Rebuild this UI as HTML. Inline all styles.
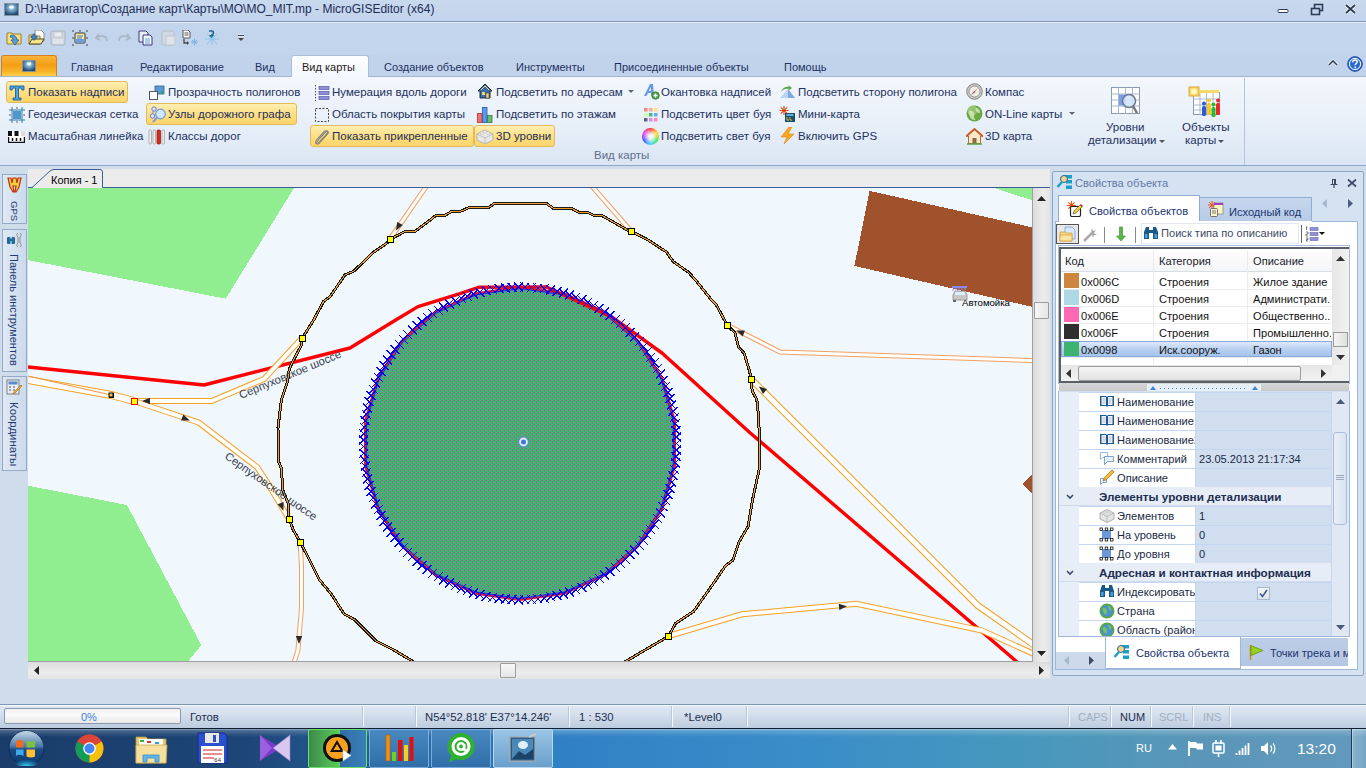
<!DOCTYPE html>
<html><head><meta charset="utf-8">
<style>
*{box-sizing:border-box;margin:0;padding:0}
html,body{width:1366px;height:768px;overflow:hidden}
body{position:relative;background:#cfdcec;font-family:"Liberation Sans",sans-serif;font-size:11.5px;color:#22305e}
.a{position:absolute}
.t{position:absolute;white-space:nowrap;line-height:14px}
#title{left:0;top:0;width:1366px;height:21px;background:linear-gradient(#c9d9ee,#c2d4ec)}
#qat{left:0;top:21px;width:1366px;height:34px;background:#c3d5ec;border-top:1px solid #7f98b8}
#tabs{left:0;top:55px;width:1366px;height:22px;background:#c0d3eb}
#ribbon{left:0;top:76px;width:1366px;height:90px;background:linear-gradient(#f3f7fc,#e7eff8 55%,#dbe6f4);border-top:1px solid #9fb6d3;border-bottom:1px solid #91a9c8}
.hl{position:absolute;height:22px;border:1px solid #e3b95c;border-radius:3px;background:linear-gradient(#fdeeb3,#fddf85 50%,#fbd46a)}
#doc{left:0;top:166px;width:1366px;height:538px;background:#cfdcec}
#status{left:0;top:704px;width:1366px;height:24px;background:linear-gradient(#dfe8f4,#d3deec 45%,#bccbdf);border-top:1px solid #7d94b4;box-shadow:inset 0 1px 0 #f6f9fd}
#taskbar{left:0;top:728px;width:1366px;height:40px;background:linear-gradient(rgba(255,255,255,.32),rgba(255,255,255,.12) 5px,rgba(255,255,255,0) 9px),linear-gradient(90deg,#1a3c6a 0%,#1d4677 18%,#2f80c4 40%,#3a8ec8 60%,#4898bc 76%,#5a96b8 88%,#6299bc 100%)}
</style></head><body>
<!-- TITLE -->
<div id="title" class="a">
  <svg class="a" style="left:4px;top:3px" width="15" height="13" viewBox="0 0 15 13"><defs><radialGradient id="spot" cx="50%" cy="35%" r="60%"><stop offset="0" stop-color="#e8f4fc"/><stop offset=".3" stop-color="#8ab8d8"/><stop offset="1" stop-color="#1e4a70"/></radialGradient></defs><rect x="0.5" y="0.5" width="14" height="12" fill="url(#spot)" stroke="#8a939c"/><ellipse cx="7.5" cy="4" rx="2.5" ry="1.6" fill="#f4fbff"/></svg>
  <div class="t" style="left:25px;top:2px;font-size:12px;color:#1e2c56">D:\Навигатор\Создание карт\Карты\MO\MO_MIT.mp - MicroGISEditor (x64)</div>
  <svg class="a" style="left:1277px;top:6px" width="12" height="10"><rect x="1" y="3.5" width="10" height="3" rx="1" fill="#fff" stroke="#2d3d57"/></svg>
  <svg class="a" style="left:1310px;top:3px" width="14" height="13"><rect x="4.5" y="1.5" width="8" height="6" fill="none" stroke="#2d3d57" stroke-width="1.6"/><rect x="1.5" y="5.5" width="8" height="6" fill="#c5d6ec" stroke="#2d3d57" stroke-width="1.6"/></svg>
  <svg class="a" style="left:1344px;top:3px" width="13" height="12"><path d="M2 2 L11 10 M11 2 L2 10" stroke="#fff" stroke-width="3.4"/><path d="M2 2 L11 10 M11 2 L2 10" stroke="#2d3d57" stroke-width="2"/></svg>
</div>
<!-- QAT -->
<div id="qat" class="a"><div class="a" style="left:0;top:0;width:1366px;height:1px;background:#e4ecf7"></div>
  <svg class="a" style="left:6px;top:8px" width="17" height="16" viewBox="0 0 17 16"><path d="M1 3h5l1 1h8v10H1z" fill="#f6e07a" stroke="#9b7f2d"/><path d="M5 5c4 0 6 2 6 5h2l-4 5-4-5h2c0-2-1-3-3-3z" fill="#5a9ad8" stroke="#2c5c96" stroke-width=".8"/></svg>
  <svg class="a" style="left:28px;top:8px" width="17" height="16" viewBox="0 0 17 16"><path d="M7 0h6l3 3v8H7z" fill="#fff" stroke="#888"/><path d="M1 5h5l1 1h5v8H1z" fill="#f6e07a" stroke="#9b7f2d"/><path d="M1 14l3-5h12l-3 5z" fill="#f9e58a" stroke="#4a4a2a"/><path d="M5 4h2v2h2v2H7v2H5V8H3V6h2z" fill="#3d8bd8" stroke="#1f4f8a" stroke-width=".6"/></svg>
  <svg class="a" style="left:50px;top:8px" width="16" height="16" viewBox="0 0 16 16"><rect x="1" y="1" width="14" height="14" rx="2" fill="#cfd6de" stroke="#aab4be"/><rect x="4" y="2" width="8" height="5" fill="#e8ecf0" stroke="#b0b8c0" stroke-width=".6"/><rect x="3" y="9" width="10" height="5" fill="#dfe4ea"/></svg>
  <svg class="a" style="left:72px;top:8px" width="16" height="16" viewBox="0 0 16 16"><rect x="3" y="3" width="10" height="10" rx="1" fill="#fbeaa0" stroke="#333"/><rect x="3.5" y="9" width="9" height="3.5" fill="#6c9edc"/><path d="M5 6h6M5 8h5" stroke="#3a78c8" stroke-width="1"/><circle cx="1" cy="1" r=".8" fill="#333"/><circle cx="15" cy="1" r=".8" fill="#333"/><circle cx="1" cy="15" r=".8" fill="#333"/><circle cx="15" cy="15" r=".8" fill="#333"/><circle cx="8" cy="1" r=".8" fill="#333"/><circle cx="1" cy="8" r=".8" fill="#333"/><circle cx="15" cy="8" r=".8" fill="#333"/></svg>
  <svg class="a" style="left:95px;top:11px" width="14" height="10" viewBox="0 0 14 10"><path d="M4 1L1 5l4 2M1.5 5C5 2 12 2 12 8" fill="none" stroke="#a8b6c6" stroke-width="1.6"/></svg>
  <svg class="a" style="left:117px;top:11px" width="14" height="10" viewBox="0 0 14 10"><path d="M10 1l3 4-4 2M12.5 5C9 2 2 2 2 8" fill="none" stroke="#a8b6c6" stroke-width="1.6"/></svg>
  <svg class="a" style="left:138px;top:8px" width="16" height="16" viewBox="0 0 16 16"><path d="M1 1h7l2 2v9H1z" fill="#e8f0fb" stroke="#3a3a7a"/><path d="M5 5h7l2 2v8H5z" fill="#f0f6fe" stroke="#3a3a7a"/><path d="M7 9h5M7 11h5M7 13h5" stroke="#6aa0e0"/></svg>
  <svg class="a" style="left:161px;top:8px" width="15" height="16" viewBox="0 0 15 16"><rect x="1" y="1" width="12" height="14" rx="2" fill="#d2d9e2" stroke="#b4bcc6"/><rect x="5" y="6" width="9" height="9" fill="#dfe4ea" stroke="#c0c8d0"/></svg>
  <svg class="a" style="left:182px;top:8px" width="17" height="16" viewBox="0 0 17 16"><path d="M1 0h5l2 2v6H1z" fill="#fff" stroke="#555"/><path d="M2.5 3h4M2.5 5h4" stroke="#555"/><path d="M2 9v4h4" fill="none" stroke="#444" stroke-width="1.3"/><path d="M5 11l2 2-2 2z" fill="#444"/><path d="M9 12h7M12.5 8.5v7M10 10l5 4M15 10l-5 4" stroke="#7fb2e8" stroke-width="1"/></svg>
  <svg class="a" style="left:205px;top:8px" width="14" height="16" viewBox="0 0 14 16"><path d="M0 9h14M7 2v13M2 4l10 10M12 4L2 14" stroke="#8ac4ea" stroke-width="1"/><path d="M4 1h3c2 0 2 3 0 4l-1 1" fill="none" stroke="#1d6a86" stroke-width="1.6"/><path d="M4 5h5l-2.5 3z" fill="#1d6a86"/></svg>
  <svg class="a" style="left:237px;top:12px" width="8" height="8" viewBox="0 0 8 8"><path d="M1 1.5h6" stroke="#fff" stroke-width="2"/><path d="M1 1.5h6" stroke="#444" stroke-width="1"/><path d="M1 4h6L4 7z" fill="#444"/></svg>
</div>
<!-- TABS -->
<div id="tabs" class="a">
  <div class="a" style="left:1px;top:0px;width:56px;height:21px;border:1px solid #d4801f;border-bottom:none;border-radius:3px 3px 0 0;background:linear-gradient(#f9b43a,#f49e14 45%,#f8b62a 80%,#fcd04a)"></div>
  <svg class="a" style="left:22px;top:5px" width="14" height="12" viewBox="0 0 15 13"><rect x="0.5" y="0.5" width="14" height="12" fill="url(#spot)" stroke="#8a939c"/><ellipse cx="7.5" cy="4" rx="2.5" ry="1.6" fill="#f4fbff"/></svg>
  <div class="a" style="left:291px;top:0px;width:78px;height:22px;border:1px solid #a9bfd6;border-bottom:none;border-radius:3px 3px 0 0;background:linear-gradient(#fdfeff,#f3f7fc)"></div>
  <div class="t" style="left:71px;top:5px;font-size:11px">Главная</div>
  <div class="t" style="left:140px;top:5px;font-size:11px">Редактирование</div>
  <div class="t" style="left:255px;top:5px;font-size:11px">Вид</div>
  <div class="t" style="left:302px;top:5px;font-size:11px;color:#2b1a1a">Вид карты</div>
  <div class="t" style="left:384px;top:5px;font-size:11px">Создание объектов</div>
  <div class="t" style="left:516px;top:5px;font-size:11px">Инструменты</div>
  <div class="t" style="left:614px;top:5px;font-size:11px">Присоединенные объекты</div>
  <div class="t" style="left:784px;top:5px;font-size:11px">Помощь</div>
  <svg class="a" style="left:1327px;top:4px" width="12" height="8" viewBox="0 0 12 8"><path d="M2 6l4-4 4 4" fill="none" stroke="#fff" stroke-width="3"/><path d="M2 6l4-4 4 4" fill="none" stroke="#2d3d57" stroke-width="1.6"/></svg>
  <svg class="a" style="left:1347px;top:1px" width="16" height="16" viewBox="0 0 16 16"><circle cx="8" cy="8" r="7.3" fill="#2b6bd0" stroke="#1a4aa0"/><circle cx="8" cy="8" r="5.6" fill="none" stroke="#fff" stroke-width="1"/><path d="M5.8 6.2c0-1.4 1-2.2 2.2-2.2s2.2.8 2.2 2c0 1.5-2 1.6-2 3.2" fill="none" stroke="#fff" stroke-width="1.5"/><circle cx="8.2" cy="11.3" r=".9" fill="#fff"/></svg>
</div>
<!-- RIBBON -->
<div id="ribbon" class="a">
  <div class="a" style="left:292px;top:-1px;width:76px;height:1px;background:#f4f8fc"></div>
  <div class="hl" style="left:6px;top:4px;width:122px"></div>
  <div class="hl" style="left:146px;top:26px;width:151px"></div>
  <div class="hl" style="left:310px;top:48px;width:164px"></div>
  <div class="hl" style="left:474px;top:48px;width:81px"></div>
  <!-- row1 y=8 icons -->
  <svg class="a" style="left:9px;top:8px" width="16" height="16" viewBox="0 0 16 16"><path d="M1 1h14v4h-2l-1-2H9.5v10H12v2H4v-2h2.5V3H4L3 5H1z" fill="#4aa3e0" stroke="#1f5f9a" stroke-width=".9"/></svg>
  <svg class="a" style="left:148px;top:8px" width="17" height="16" viewBox="0 0 17 16"><rect x="7" y="1" width="9" height="8" fill="#5b9bd5" stroke="#2d5f94" stroke-width=".8"/><rect x="13" y="6" width="3" height="3" fill="#2a9a8a"/><rect x="1.5" y="6.5" width="8" height="8" fill="#fff" stroke="#555"/></svg>
  <svg class="a" style="left:314px;top:8px" width="16" height="16" viewBox="0 0 16 16"><path d="M1.5 0v16" stroke="#555" stroke-dasharray="1.5 1.5"/><rect x="5" y="1.5" width="10" height="3" fill="#8f8fd8" stroke="#5a5aa8" stroke-width=".7"/><rect x="5" y="6.5" width="10" height="3" fill="#8f8fd8" stroke="#5a5aa8" stroke-width=".7"/><rect x="5" y="11.5" width="10" height="3" fill="#8f8fd8" stroke="#5a5aa8" stroke-width=".7"/></svg>
  <svg class="a" style="left:477px;top:6px" width="16" height="16" viewBox="0 0 16 16"><path d="M1 8L8 1l7 7h-2v7H3V8z" fill="#3a6ea8" stroke="#1d2d3d"/><rect x="5" y="9" width="3" height="3" fill="#f6d36a"/><path d="M4 7l4-4 4 4" fill="none" stroke="#f6d36a"/><rect x="9" y="10" width="3" height="5" fill="#f6d36a" stroke="#333" stroke-width=".5"/></svg>
  <svg class="a" style="left:628px;top:13px" width="6" height="4"><path d="M0 0h6L3 3z" fill="#666"/></svg>
  <svg class="a" style="left:643px;top:6px" width="17" height="17" viewBox="0 0 17 17"><path d="M1 13L7 1h3l1 12H8.5L8 10H5l-1.5 3zM5.8 8H8l-.3-4z" fill="#6a98e8"/><circle cx="12.5" cy="12.5" r="3.8" fill="#4aa040" stroke="#2a6a2a" stroke-width=".6"/><path d="M10.5 12.5h4M12.5 10.5v4" stroke="#fff" stroke-width="1.4"/></svg>
  <svg class="a" style="left:779px;top:6px" width="17" height="16" viewBox="0 0 17 16"><path d="M1 15L9 6l7 9z" fill="#b9d3f3"/><path d="M9 6l7 9H9z" fill="#7ea9e0"/><path d="M2 9c1-4 5-6 8-5l-1-2 4 3-4 3 1-2C7 5 4 6 2 9z" fill="#5aaa4a"/></svg>
  <svg class="a" style="left:966px;top:6px" width="17" height="17" viewBox="0 0 17 17"><circle cx="8.5" cy="8.5" r="7.8" fill="#c8c8c8" stroke="#707070" stroke-width=".8"/><circle cx="8.5" cy="8.5" r="5.5" fill="#f0ebe6" stroke="#888" stroke-width=".8"/><path d="M12 5L8 9.5 5 12l3.5-4z" fill="#d03a20"/><path d="M5 12l3.5-4 1 1z" fill="#666"/></svg>
  <!-- row2 y=30 -->
  <svg class="a" style="left:9px;top:30px" width="16" height="16" viewBox="0 0 16 16"><path d="M0 3h16M0 13h16M3 0v16M13 0v16" stroke="#2e7aa8" stroke-width="1"/><rect x="4" y="4" width="8" height="8" fill="#4f97c8"/><path d="M7 0.5h2L8 2zM7 15.5h2L8 14zM0.5 7v2L2 8zM15.5 7v2L14 8z" fill="#333"/></svg>
  <svg class="a" style="left:150px;top:29px" width="17" height="17" viewBox="0 0 17 17"><path d="M4 3L2 10" stroke="#7a8ad8" stroke-width="1"/><circle cx="4" cy="3" r="2.2" fill="#dfe6ff" stroke="#6a7ad8"/><circle cx="2.5" cy="10" r="2.2" fill="#dfe6ff" stroke="#6a7ad8"/><circle cx="10.5" cy="8" r="4.8" fill="#cfeaff" stroke="#6a9ad8" stroke-width="1.2"/><path d="M7 11.5L3 16" stroke="#8a9ad8" stroke-width="2"/></svg>
  <svg class="a" style="left:314px;top:30px" width="16" height="16" viewBox="0 0 16 16"><rect x="1.5" y="1.5" width="13" height="13" fill="none" stroke="#444" stroke-dasharray="2 1.5"/></svg>
  <svg class="a" style="left:477px;top:30px" width="16" height="16" viewBox="0 0 16 16"><rect x="0.5" y="6.5" width="4.5" height="9" fill="#f07070" stroke="#b83030" stroke-width=".8"/><rect x="5.5" y="0.5" width="4.5" height="15" fill="#5a9ae8" stroke="#2a5aa8" stroke-width=".8"/><rect x="10.5" y="8.5" width="4.5" height="7" fill="#6ab87a" stroke="#2a7a3a" stroke-width=".8"/></svg>
  <svg class="a" style="left:644px;top:31px" width="14" height="14" viewBox="0 0 14 14"><rect x="0" y="0" width="3.5" height="3.5" fill="#e88"/><rect x="5" y="0" width="3.5" height="3.5" fill="#fa8"/><rect x="10" y="0" width="3.5" height="3.5" fill="#fd8"/><rect x="0" y="5" width="3.5" height="3.5" fill="#cfa"/><rect x="5" y="5" width="3.5" height="3.5" fill="#4b8"/><rect x="10" y="5" width="3.5" height="3.5" fill="#6ae"/><rect x="0" y="10" width="3.5" height="3.5" fill="#568"/><rect x="5" y="10" width="3.5" height="3.5" fill="#d8e"/><rect x="10" y="10" width="3.5" height="3.5" fill="#f8b"/></svg>
  <svg class="a" style="left:779px;top:29px" width="17" height="17" viewBox="0 0 17 17"><path d="M5 0v9M0.5 4.5h9M1.8 1.3l6.4 6.4M8.2 1.3L1.8 7.7" stroke="#e24a12" stroke-width="1.1"/><rect x="6" y="7" width="10" height="9" fill="#1c4f6a"/><rect x="7.5" y="8" width="7" height="2" fill="#5ab0d8"/><path d="M8 11v3h2M11 11v3h2" stroke="#e8d060" stroke-width="1"/></svg>
  <svg class="a" style="left:966px;top:28px" width="17" height="17" viewBox="0 0 17 17"><circle cx="8.5" cy="8.5" r="8" fill="#6aa844"/><circle cx="6.5" cy="5.5" r="5" fill="#a8d088" opacity=".7"/><path d="M3 6c2-1 4 0 5 2s-1 4 1 6-4 1-5-2-2-4-1-6zM10 3c2 0 4 2 4 4s-2 1-3 0-2-3-1-4z" fill="#d8e8c0" opacity=".8"/></svg>
  <svg class="a" style="left:1068px;top:112px;display:none" width="6" height="4"><path d="M0 0h6L3 3z" fill="#666"/></svg>
  <svg class="a" style="left:1069px;top:35px" width="6" height="4"><path d="M0 0h6L3 3z" fill="#666"/></svg>
  <!-- row3 y=52 -->
  <svg class="a" style="left:8px;top:54px" width="17" height="12" viewBox="0 0 17 12"><rect x="0" y="0" width="17" height="12" fill="#fff"/><rect x="0" y="0" width="4" height="5" fill="#111"/><rect x="6.5" y="0" width="4" height="5" fill="#111"/><rect x="13" y="0" width="4" height="5" fill="#ddd"/><path d="M0.5 6v5.5h16V6M4.5 7v3M8.5 7v3M12.5 7v3" fill="none" stroke="#111" stroke-width="1.5"/></svg>
  <svg class="a" style="left:148px;top:52px" width="17" height="16" viewBox="0 0 17 16"><rect x="1" y="1" width="2.5" height="14" rx="1" fill="#f0f0f0" stroke="#999" stroke-width=".7"/><rect x="5" y="1" width="2.5" height="14" rx="1" fill="#f0f0f0" stroke="#999" stroke-width=".7"/><rect x="9" y="1" width="3.5" height="14" rx="1" fill="#d82a1a" stroke="#8a1a0a" stroke-width=".7"/><rect x="14" y="1" width="2.5" height="14" rx="1" fill="#f0f0f0" stroke="#999" stroke-width=".7"/></svg>
  <svg class="a" style="left:313px;top:51px" width="17" height="17" viewBox="0 0 17 17"><path d="M3 14L12 4c2-2 4 0 2 2l-8 9c-1 1-3 1-3-1 0-1 1-2 2-3l7-8" fill="none" stroke="#555" stroke-width="1.6"/><path d="M3 14L12 4c2-2 4 0 2 2l-8 9c-1 1-3 1-3-1 0-1 1-2 2-3l7-8" fill="none" stroke="#ccc" stroke-width=".6"/></svg>
  <svg class="a" style="left:476px;top:51px" width="18" height="17" viewBox="0 0 18 17"><path d="M1 6l8-4 8 4v6l-8 4-8-4z" fill="#e8e8e8" stroke="#a8a8a8" stroke-width=".8"/><path d="M1 6l8 4 8-4M9 10v6" fill="none" stroke="#b8b8b8" stroke-width=".8"/><ellipse cx="6" cy="5" rx="2" ry="1.2" fill="#fff" stroke="#aaa" stroke-width=".6"/><ellipse cx="12" cy="5" rx="2" ry="1.2" fill="#fff" stroke="#aaa" stroke-width=".6"/></svg>
  <div class="a" style="left:642px;top:51px;width:17px;height:17px;border-radius:50%;background:radial-gradient(circle,#fff 0,rgba(255,255,255,.85) 20%,rgba(255,255,255,0) 70%),conic-gradient(#ff3030,#ffd020,#40e040,#30d0ff,#4040ff,#e030e0,#ff3030)"></div>
  <svg class="a" style="left:780px;top:50px" width="16" height="17" viewBox="0 0 16 17"><path d="M9 0L1 10h6l-3 7 10-10H8l4-7z" fill="#f8a820" stroke="#e08010" stroke-width=".6"/></svg>
  <svg class="a" style="left:966px;top:51px" width="17" height="17" viewBox="0 0 17 17"><path d="M0.5 8L8.5 1l8 7h-2v7.5h-12V8z" fill="#f8e8c8" stroke="#b86a30"/><path d="M0 8.5L8.5 1 17 8.5" fill="none" stroke="#c85a20" stroke-width="1.8"/><rect x="6.5" y="10" width="4" height="5.5" fill="#8a6a4a"/><path d="M1 16h15" stroke="#5aa040" stroke-width="1.5"/></svg>
  <!-- texts -->
  <div class="t" style="left:28px;top:8px">Показать надписи</div>
  <div class="t" style="left:168px;top:8px">Прозрачность полигонов</div>
  <div class="t" style="left:332px;top:8px">Нумерация вдоль дороги</div>
  <div class="t" style="left:496px;top:8px">Подсветить по адресам</div>
  <div class="t" style="left:661px;top:8px">Окантовка надписей</div>
  <div class="t" style="left:798px;top:8px">Подсветить сторону полигона</div>
  <div class="t" style="left:985px;top:8px">Компас</div>
  <div class="t" style="left:28px;top:30px">Геодезическая сетка</div>
  <div class="t" style="left:168px;top:30px">Узлы дорожного графа</div>
  <div class="t" style="left:332px;top:30px">Область покрытия карты</div>
  <div class="t" style="left:496px;top:30px">Подсветить по этажам</div>
  <div class="t" style="left:661px;top:30px">Подсветить цвет буя</div>
  <div class="t" style="left:798px;top:30px">Мини-карта</div>
  <div class="t" style="left:985px;top:30px">ON-Line карты</div>
  <div class="t" style="left:28px;top:52px">Масштабная линейка</div>
  <div class="t" style="left:168px;top:52px">Классы дорог</div>
  <div class="t" style="left:332px;top:52px">Показать прикрепленные</div>
  <div class="t" style="left:496px;top:52px">3D уровни</div>
  <div class="t" style="left:661px;top:52px">Подсветить свет буя</div>
  <div class="t" style="left:798px;top:52px">Включить GPS</div>
  <div class="t" style="left:985px;top:52px">3D карта</div>
  <div class="t" style="left:594px;top:71px;color:#5d6f8c">Вид карты</div>
  <!-- large buttons -->
  <svg class="a" style="left:1110px;top:9px" width="32" height="32" viewBox="0 0 32 32"><rect x="1.5" y="1.5" width="28" height="26" fill="#fff" stroke="#8a9ab0"/><path d="M1.5 8h28M1.5 14h28M1.5 20h28M8.5 1.5v26M15.5 1.5v26M22.5 1.5v26" stroke="#a8b8cc"/><rect x="9" y="8.5" width="6" height="11" fill="#7a9ee8"/><circle cx="19" cy="15" r="6.5" fill="#cfe4f8" fill-opacity=".85" stroke="#6a7a90" stroke-width="1.5"/><path d="M23 20l4 7" stroke="#777" stroke-width="2.5"/></svg>
  <div class="t" style="left:1106px;top:43px">Уровни</div>
  <div class="t" style="left:1088px;top:56px">детализации</div>
  <svg class="a" style="left:1159px;top:63px" width="6" height="4"><path d="M0 0h6L3 3z" fill="#555"/></svg>
  <svg class="a" style="left:1188px;top:9px" width="34" height="32" viewBox="0 0 34 32"><rect x="5.5" y="6.5" width="26" height="22" fill="#fff" stroke="#8a9ab0"/><path d="M5.5 13h26M5.5 19h26M5.5 24h26M12 6.5v22M18.5 6.5v22M25 6.5v22" stroke="#a8b8cc"/><rect x="1" y="1" width="10" height="9" fill="#f8d868" stroke="#d8a830"/><rect x="11" y="4" width="20" height="3" fill="#f8d868"/><circle cx="6" cy="5.5" r="3" fill="#fff6c0"/><rect x="14" y="20" width="4" height="10" rx="1.5" fill="#2a5ad8"/><circle cx="16" cy="17.5" r="2" fill="#2a5ad8"/><rect x="19" y="17" width="4" height="12" rx="1.5" fill="#f8c820"/><circle cx="21" cy="14.5" r="2" fill="#f8c820"/><rect x="23.5" y="21" width="4" height="10" rx="1.5" fill="#2ab83a"/><circle cx="25.5" cy="18.5" r="2" fill="#2ab83a"/><rect x="28" y="17" width="4" height="12" rx="1.5" fill="#e82a2a"/><circle cx="30" cy="14.5" r="2" fill="#e82a2a"/></svg>
  <div class="t" style="left:1182px;top:43px">Объекты</div>
  <div class="t" style="left:1185px;top:56px">карты</div>
  <svg class="a" style="left:1218px;top:63px" width="6" height="4"><path d="M0 0h6L3 3z" fill="#555"/></svg>
  <div class="a" style="left:1244px;top:1px;width:1px;height:87px;background:#b3c6de"></div>
</div>
<!-- DOC AREA -->
<div id="doc" class="a"></div>
<!-- left side tabs -->
<div class="a" style="left:2px;top:174px;width:25px;height:50px;border:1px solid #94aac6;background:linear-gradient(90deg,#dfe9f5,#cbdaec)"></div>
<div class="a" style="left:2px;top:229px;width:25px;height:143px;border:1px solid #94aac6;background:linear-gradient(90deg,#dfe9f5,#cbdaec)"></div>
<div class="a" style="left:2px;top:376px;width:25px;height:95px;border:1px solid #94aac6;background:linear-gradient(90deg,#dfe9f5,#cbdaec)"></div>
<svg class="a" style="left:7px;top:177px" width="15" height="16" viewBox="0 0 15 16"><path d="M1 1l3 0 1 5 1-5h3l1 5 1-5h3l-2 9-3 5h-1l1-6h-3l1 6h-1l-3-5z" fill="#f0d040" stroke="#c03010" stroke-width="1.2"/></svg>
<div class="t" style="left:7px;top:201px;font-size:9.5px;transform-origin:0 0;transform:translate(14px,0) rotate(90deg);color:#1e3a6e">GPS</div>
<svg class="a" style="left:6px;top:232px" width="17" height="16" viewBox="0 0 17 16"><rect x="1" y="5" width="3.5" height="7" rx="1" fill="#1f6a96"/><rect x="5.5" y="5" width="3.5" height="7" rx="1" fill="#1f6a96"/><rect x="3" y="7" width="4" height="2" fill="#1f6a96"/><path d="M12 1c-2 1-1 3 0 4v6c-1 1-2 3 0 4M14 1c2 1 1 3 0 4v6c1 1 2 3 0 4" fill="none" stroke="#888" stroke-width="1"/></svg>
<div class="t" style="left:7px;top:254px;font-size:11px;transform-origin:0 0;transform:translate(14px,0) rotate(90deg);color:#1e3a6e">Панель инструментов</div>
<svg class="a" style="left:6px;top:379px" width="17" height="17" viewBox="0 0 17 17"><rect x="1" y="1" width="12" height="14" fill="#e8eef4" stroke="#666" stroke-width=".8"/><rect x="2.5" y="2.5" width="9" height="3" fill="#5a8ac8"/><path d="M3 8h2M7 8h2M3 11h2M7 11h2" stroke="#555"/><path d="M16 7L9 14l-2 1 1-2 7-7z" fill="#f0b030" stroke="#a06010" stroke-width=".6"/></svg>
<div class="t" style="left:7px;top:402px;font-size:11.4px;transform-origin:0 0;transform:translate(14px,0) rotate(90deg);color:#1e3a6e">Координаты</div>
<!-- tab strip -->
<div class="a" style="left:28px;top:169px;width:1022px;height:19px;background:#ebebeb"></div>
<div class="a" style="left:28px;top:187px;width:1022px;height:1px;background:#3c5e98"></div>
<svg class="a" style="left:28px;top:168px" width="80" height="21" viewBox="0 0 80 21"><path d="M0 19.5H4L22 3Q24 1.5 26 1.5H72Q74.5 1.5 74.5 4V19.5" fill="#ececec" stroke="#3c5e98" stroke-width="1"/><rect x="5" y="19" width="69" height="2" fill="#ececec"/></svg>
<div class="t" style="left:51px;top:173px;font-size:11px;color:#000">Копия - 1</div>
<svg class="a" style="left:28px;top:188px" width="1004" height="473" viewBox="28 188 1004 473">
<defs><pattern id="gz" x="0" y="0" width="4" height="4" patternUnits="userSpaceOnUse"><rect width="4" height="4" fill="#3cb371"/><rect x="2" y="0" width="1" height="1" fill="#d8449c"/><rect x="0" y="2" width="1" height="1" fill="#d8449c"/></pattern></defs>
<g shape-rendering="crispEdges">
<rect x="28" y="188" width="1005" height="473" fill="#f0f7fd"/>
<polygon points="28.0,188.0 294.0,188.0 225.7,298.7 28.0,260.1" fill="#90ee90"/>
<polygon points="28.0,485.7 127.0,505.0 201.3,645.1 188.4,661.0 28.0,661.0" fill="#90ee90"/>
<polygon points="994.0,188.0 1032.0,200.2 1032.0,188.0" fill="#90ee90"/>
<polygon points="869.6,190.9 1032.0,227.3 1032.0,306.8 854.4,265.9" fill="#a0522d"/>
<polygon points="1022.8,484.0 1032.0,474.0 1032.0,494.0" fill="#a0522d"/>
</g>
<polygon points="674.9,465.8 662.4,508.5 638.3,546.0 604.6,575.2 564.1,593.7 520.0,600.0 475.9,593.7 435.4,575.2 401.7,546.0 377.6,508.5 365.1,465.8 365.1,421.2 377.6,378.5 401.7,341.0 435.4,311.8 475.9,293.3 520.0,287.0 564.1,293.3 604.6,311.8 638.3,341.0 662.4,378.5 674.9,421.2" fill="url(#gz)" shape-rendering="crispEdges"/>
<polygon points="674.9,465.8 662.4,508.5 638.3,546.0 604.6,575.2 564.1,593.7 520.0,600.0 475.9,593.7 435.4,575.2 401.7,546.0 377.6,508.5 365.1,465.8 365.1,421.2 377.6,378.5 401.7,341.0 435.4,311.8 475.9,293.3 520.0,287.0 564.1,293.3 604.6,311.8 638.3,341.0 662.4,378.5 674.9,421.2" fill="none" stroke="#ff1010" stroke-width="2.2"/>
<polygon points="674.9,465.8 662.4,508.5 638.3,546.0 604.6,575.2 564.1,593.7 520.0,600.0 475.9,593.7 435.4,575.2 401.7,546.0 377.6,508.5 365.1,465.8 365.1,421.2 377.6,378.5 401.7,341.0 435.4,311.8 475.9,293.3 520.0,287.0 564.1,293.3 604.6,311.8 638.3,341.0 662.4,378.5 674.9,421.2" fill="none" stroke="#2020e0" stroke-width="1" transform="translate(520 443.5) scale(.99) translate(-520 -443.5)"/>
<polyline points="28.0,367.0 204.0,385.0 350.0,348.0 395.7,320.0 418.0,306.6 460.0,293.7 478.7,287.3 546.5,287.0 611.8,316.9 662.0,353.0 750.0,432.7 1016.0,661.0 1020.0,665.0" fill="none" stroke="#ff0000" stroke-width="3.4" stroke-linejoin="round"/>
<path d="M672.0 439.0L681.0 448.0M681.0 439.0L672.0 448.0M671.9 445.5L680.9 454.5M680.9 445.5L671.9 454.5M671.5 452.0L680.5 461.0M680.5 452.0L671.5 461.0M670.8 458.5L679.8 467.5M679.8 458.5L670.8 467.5M669.8 464.9L678.8 473.9M678.8 464.9L669.8 473.9M668.6 471.3L677.6 480.3M677.6 471.3L668.6 480.3M667.1 477.7L676.1 486.7M676.1 477.7L667.1 486.7M665.4 483.9L674.4 492.9M674.4 483.9L665.4 492.9M663.4 490.1L672.4 499.1M672.4 490.1L663.4 499.1M661.2 496.2L670.2 505.2M670.2 496.2L661.2 505.2M658.6 502.3L667.6 511.3M667.6 502.3L658.6 511.3M655.9 508.2L664.9 517.2M664.9 508.2L655.9 517.2M652.9 513.9L661.9 522.9M661.9 513.9L652.9 522.9M649.7 519.6L658.7 528.6M658.7 519.6L649.7 528.6M646.2 525.1L655.2 534.1M655.2 525.1L646.2 534.1M642.5 530.5L651.5 539.5M651.5 530.5L642.5 539.5M638.6 535.7L647.6 544.7M647.6 535.7L638.6 544.7M634.5 540.7L643.5 549.7M643.5 540.7L634.5 549.7M630.1 545.6L639.1 554.6M639.1 545.6L630.1 554.6M625.6 550.2L634.6 559.2M634.6 550.2L625.6 559.2M620.9 554.7L629.9 563.7M629.9 554.7L620.9 563.7M616.0 559.0L625.0 568.0M625.0 559.0L616.0 568.0M610.9 563.1L619.9 572.1M619.9 563.1L610.9 572.1M605.6 566.9L614.6 575.9M614.6 566.9L605.6 575.9M600.2 570.6L609.2 579.6M609.2 570.6L600.2 579.6M594.7 574.0L603.7 583.0M603.7 574.0L594.7 583.0M589.0 577.2L598.0 586.2M598.0 577.2L589.0 586.2M583.2 580.1L592.2 589.1M592.2 580.1L583.2 589.1M577.3 582.8L586.3 591.8M586.3 582.8L577.3 591.8M571.2 585.2L580.2 594.2M580.2 585.2L571.2 594.2M565.1 587.4L574.1 596.4M574.1 587.4L565.1 596.4M558.9 589.4L567.9 598.4M567.9 589.4L558.9 598.4M552.6 591.0L561.6 600.0M561.6 591.0L552.6 600.0M546.2 592.5L555.2 601.5M555.2 592.5L546.2 601.5M539.8 593.6L548.8 602.6M548.8 593.6L539.8 602.6M533.4 594.5L542.4 603.5M542.4 594.5L533.4 603.5M526.9 595.1L535.9 604.1M535.9 595.1L526.9 604.1M520.4 595.4L529.4 604.4M529.4 595.4L520.4 604.4M513.9 595.5L522.9 604.5M522.9 595.5L513.9 604.5M507.4 595.3L516.4 604.3M516.4 595.3L507.4 604.3M500.9 594.8L509.9 603.8M509.9 594.8L500.9 603.8M494.4 594.1L503.4 603.1M503.4 594.1L494.4 603.1M488.0 593.1L497.0 602.1M497.0 593.1L488.0 602.1M481.6 591.8L490.6 600.8M490.6 591.8L481.6 600.8M475.3 590.2L484.3 599.2M484.3 590.2L475.3 599.2M469.0 588.4L478.0 597.4M478.0 588.4L469.0 597.4M462.8 586.4L471.8 595.4M471.8 586.4L462.8 595.4M456.7 584.1L465.7 593.1M465.7 584.1L456.7 593.1M450.8 581.5L459.8 590.5M459.8 581.5L450.8 590.5M444.9 578.7L453.9 587.7M453.9 578.7L444.9 587.7M439.1 575.6L448.1 584.6M448.1 575.6L439.1 584.6M433.5 572.3L442.5 581.3M442.5 572.3L433.5 581.3M428.0 568.8L437.0 577.8M437.0 568.8L428.0 577.8M422.7 565.0L431.7 574.0M431.7 565.0L422.7 574.0M417.6 561.1L426.6 570.1M426.6 561.1L417.6 570.1M412.6 556.9L421.6 565.9M421.6 556.9L412.6 565.9M407.8 552.5L416.8 561.5M416.8 552.5L407.8 561.5M403.1 547.9L412.1 556.9M412.1 547.9L403.1 556.9M398.7 543.2L407.7 552.2M407.7 543.2L398.7 552.2M394.5 538.2L403.5 547.2M403.5 538.2L394.5 547.2M390.4 533.1L399.4 542.1M399.4 533.1L390.4 542.1M386.6 527.8L395.6 536.8M395.6 527.8L386.6 536.8M383.0 522.4L392.0 531.4M392.0 522.4L383.0 531.4M379.7 516.8L388.7 525.8M388.7 516.8L379.7 525.8M376.6 511.1L385.6 520.1M385.6 511.1L376.6 520.1M373.7 505.2L382.7 514.2M382.7 505.2L373.7 514.2M371.1 499.3L380.1 508.3M380.1 499.3L371.1 508.3M368.7 493.2L377.7 502.2M377.7 493.2L368.7 502.2M366.6 487.1L375.6 496.1M375.6 487.1L366.6 496.1M364.7 480.8L373.7 489.8M373.7 480.8L364.7 489.8M363.1 474.5L372.1 483.5M372.1 474.5L363.1 483.5M361.7 468.1L370.7 477.1M370.7 468.1L361.7 477.1M360.7 461.7L369.7 470.7M369.7 461.7L360.7 470.7M359.8 455.3L368.8 464.3M368.8 455.3L359.8 464.3M359.3 448.8L368.3 457.8M368.3 448.8L359.3 457.8M359.0 442.3L368.0 451.3M368.0 442.3L359.0 451.3M359.0 435.7L368.0 444.7M368.0 435.7L359.0 444.7M359.3 429.2L368.3 438.2M368.3 429.2L359.3 438.2M359.8 422.7L368.8 431.7M368.8 422.7L359.8 431.7M360.7 416.3L369.7 425.3M369.7 416.3L360.7 425.3M361.7 409.9L370.7 418.9M370.7 409.9L361.7 418.9M363.1 403.5L372.1 412.5M372.1 403.5L363.1 412.5M364.7 397.2L373.7 406.2M373.7 397.2L364.7 406.2M366.6 390.9L375.6 399.9M375.6 390.9L366.6 399.9M368.7 384.8L377.7 393.8M377.7 384.8L368.7 393.8M371.1 378.7L380.1 387.7M380.1 378.7L371.1 387.7M373.7 372.8L382.7 381.8M382.7 372.8L373.7 381.8M376.6 366.9L385.6 375.9M385.6 366.9L376.6 375.9M379.7 361.2L388.7 370.2M388.7 361.2L379.7 370.2M383.0 355.6L392.0 364.6M392.0 355.6L383.0 364.6M386.6 350.2L395.6 359.2M395.6 350.2L386.6 359.2M390.4 344.9L399.4 353.9M399.4 344.9L390.4 353.9M394.5 339.8L403.5 348.8M403.5 339.8L394.5 348.8M398.7 334.8L407.7 343.8M407.7 334.8L398.7 343.8M403.1 330.1L412.1 339.1M412.1 330.1L403.1 339.1M407.8 325.5L416.8 334.5M416.8 325.5L407.8 334.5M412.6 321.1L421.6 330.1M421.6 321.1L412.6 330.1M417.6 316.9L426.6 325.9M426.6 316.9L417.6 325.9M422.7 313.0L431.7 322.0M431.7 313.0L422.7 322.0M428.0 309.2L437.0 318.2M437.0 309.2L428.0 318.2M433.5 305.7L442.5 314.7M442.5 305.7L433.5 314.7M439.1 302.4L448.1 311.4M448.1 302.4L439.1 311.4M444.9 299.3L453.9 308.3M453.9 299.3L444.9 308.3M450.8 296.5L459.8 305.5M459.8 296.5L450.8 305.5M456.7 293.9L465.7 302.9M465.7 293.9L456.7 302.9M462.8 291.6L471.8 300.6M471.8 291.6L462.8 300.6M469.0 289.6L478.0 298.6M478.0 289.6L469.0 298.6M475.3 287.8L484.3 296.8M484.3 287.8L475.3 296.8M481.6 286.2L490.6 295.2M490.6 286.2L481.6 295.2M488.0 284.9L497.0 293.9M497.0 284.9L488.0 293.9M494.4 283.9L503.4 292.9M503.4 283.9L494.4 292.9M500.9 283.2L509.9 292.2M509.9 283.2L500.9 292.2M507.4 282.7L516.4 291.7M516.4 282.7L507.4 291.7M513.9 282.5L522.9 291.5M522.9 282.5L513.9 291.5M520.4 282.6L529.4 291.6M529.4 282.6L520.4 291.6M526.9 282.9L535.9 291.9M535.9 282.9L526.9 291.9M533.4 283.5L542.4 292.5M542.4 283.5L533.4 292.5M539.8 284.4L548.8 293.4M548.8 284.4L539.8 293.4M546.2 285.5L555.2 294.5M555.2 285.5L546.2 294.5M552.6 287.0L561.6 296.0M561.6 287.0L552.6 296.0M558.9 288.6L567.9 297.6M567.9 288.6L558.9 297.6M565.1 290.6L574.1 299.6M574.1 290.6L565.1 299.6M571.2 292.8L580.2 301.8M580.2 292.8L571.2 301.8M577.3 295.2L586.3 304.2M586.3 295.2L577.3 304.2M583.2 297.9L592.2 306.9M592.2 297.9L583.2 306.9M589.0 300.8L598.0 309.8M598.0 300.8L589.0 309.8M594.7 304.0L603.7 313.0M603.7 304.0L594.7 313.0M600.2 307.4L609.2 316.4M609.2 307.4L600.2 316.4M605.6 311.1L614.6 320.1M614.6 311.1L605.6 320.1M610.9 314.9L619.9 323.9M619.9 314.9L610.9 323.9M616.0 319.0L625.0 328.0M625.0 319.0L616.0 328.0M620.9 323.3L629.9 332.3M629.9 323.3L620.9 332.3M625.6 327.8L634.6 336.8M634.6 327.8L625.6 336.8M630.1 332.4L639.1 341.4M639.1 332.4L630.1 341.4M634.5 337.3L643.5 346.3M643.5 337.3L634.5 346.3M638.6 342.3L647.6 351.3M647.6 342.3L638.6 351.3M642.5 347.5L651.5 356.5M651.5 347.5L642.5 356.5M646.2 352.9L655.2 361.9M655.2 352.9L646.2 361.9M649.7 358.4L658.7 367.4M658.7 358.4L649.7 367.4M652.9 364.1L661.9 373.1M661.9 364.1L652.9 373.1M655.9 369.8L664.9 378.8M664.9 369.8L655.9 378.8M658.6 375.7L667.6 384.7M667.6 375.7L658.6 384.7M661.2 381.8L670.2 390.8M670.2 381.8L661.2 390.8M663.4 387.9L672.4 396.9M672.4 387.9L663.4 396.9M665.4 394.1L674.4 403.1M674.4 394.1L665.4 403.1M667.1 400.3L676.1 409.3M676.1 400.3L667.1 409.3M668.6 406.7L677.6 415.7M677.6 406.7L668.6 415.7M669.8 413.1L678.8 422.1M678.8 413.1L669.8 422.1M670.8 419.5L679.8 428.5M679.8 419.5L670.8 428.5M671.5 426.0L680.5 435.0M680.5 426.0L671.5 435.0M671.9 432.5L680.9 441.5M680.9 432.5L671.9 441.5" stroke="#0000ff" stroke-width="1" fill="none" shape-rendering="crispEdges"/>
<polyline points="28.0,380.0 111.0,395.0 134.0,401.0" fill="none" stroke="#f5a020" stroke-width="8" stroke-linejoin="miter"/>
<polyline points="28.0,380.0 111.0,395.0 134.0,401.0" fill="none" stroke="#ffffff" stroke-width="6" stroke-linejoin="miter"/>
<polyline points="28.0,376.0 111.0,395.0" fill="none" stroke="#e89a40" stroke-width="1"/>
<polyline points="134.0,401.0 211.7,401.0 264.0,379.0 302.0,338.0" fill="none" stroke="#f5a020" stroke-width="6" stroke-linejoin="miter"/>
<polyline points="134.0,401.0 211.7,401.0 264.0,379.0 302.0,338.0" fill="none" stroke="#ffffff" stroke-width="4" stroke-linejoin="miter"/>
<polyline points="134.0,401.0 198.6,422.5 257.0,467.0 268.6,484.7 289.0,519.0" fill="none" stroke="#f5a020" stroke-width="6" stroke-linejoin="miter"/>
<polyline points="134.0,401.0 198.6,422.5 257.0,467.0 268.6,484.7 289.0,519.0" fill="none" stroke="#ffffff" stroke-width="4" stroke-linejoin="miter"/>
<polyline points="390.0,239.0 428.0,184.0" fill="none" stroke="#f4a060" stroke-width="5" stroke-linejoin="miter"/>
<polyline points="390.0,239.0 428.0,184.0" fill="none" stroke="#ffffff" stroke-width="3" stroke-linejoin="miter"/>
<polyline points="631.0,231.0 590.0,184.0" fill="none" stroke="#f4a060" stroke-width="5" stroke-linejoin="miter"/>
<polyline points="631.0,231.0 590.0,184.0" fill="none" stroke="#ffffff" stroke-width="3" stroke-linejoin="miter"/>
<polyline points="727.0,325.0 780.0,352.0 1034.0,360.5" fill="none" stroke="#f4a060" stroke-width="5" stroke-linejoin="miter"/>
<polyline points="727.0,325.0 780.0,352.0 1034.0,360.5" fill="none" stroke="#ffffff" stroke-width="3" stroke-linejoin="miter"/>
<polyline points="751.0,379.0 978.0,605.7 1034.0,645.0" fill="none" stroke="#f5a020" stroke-width="7" stroke-linejoin="miter"/>
<polyline points="751.0,379.0 978.0,605.7 1034.0,645.0" fill="none" stroke="#ffffff" stroke-width="5" stroke-linejoin="miter"/>
<polyline points="668.6,636.0 742.0,614.3 856.5,603.8 982.0,630.5 1034.0,654.0" fill="none" stroke="#f5a020" stroke-width="6" stroke-linejoin="miter"/>
<polyline points="668.6,636.0 742.0,614.3 856.5,603.8 982.0,630.5 1034.0,654.0" fill="none" stroke="#ffffff" stroke-width="4" stroke-linejoin="miter"/>
<polyline points="300.0,542.0 301.5,565.3 301.5,608.0 297.9,650.6 293.2,665.0" fill="none" stroke="#f4a060" stroke-width="5" stroke-linejoin="miter"/>
<polyline points="300.0,542.0 301.5,565.3 301.5,608.0 297.9,650.6 293.2,665.0" fill="none" stroke="#ffffff" stroke-width="3" stroke-linejoin="miter"/>
<polygon points="390.2,239.2 406.0,231.0 415.5,231.0 436.0,215.5 444.7,215.5 452.0,211.2 461.5,211.0 468.4,207.8 488.0,207.8 495.0,203.1 545.7,203.1 553.4,208.3 571.4,208.3 578.3,212.0 587.0,212.0 594.6,215.8 602.4,215.8 629.0,231.0 631.5,231.4 647.7,239.8 666.2,251.8 673.6,261.9 688.4,272.1 695.8,280.4 710.6,298.9 716.1,304.5 727.2,325.2 735.0,332.8 738.6,347.4 744.0,352.9 749.5,371.0 751.3,379.3 752.2,391.0 756.8,399.4 758.6,416.7 759.5,440.0 759.2,469.3 752.6,499.5 748.0,526.7 739.0,541.8 733.0,560.0 725.4,566.0 708.8,590.1 693.7,611.3 675.5,623.4 668.6,636.3 654.4,644.5 628.7,659.6 600.0,675.0 520.0,690.0 430.0,675.0 411.7,660.6 392.7,649.4 376.1,641.1 354.8,619.8 344.1,613.9 331.0,593.7 319.2,579.5 307.4,555.8 300.3,542.1 293.2,529.8 289.1,519.1 288.0,503.0 282.5,489.5 281.6,469.0 278.4,461.2 278.0,427.7 281.5,399.4 287.6,381.0 289.2,369.7 291.7,363.6 301.0,346.0 302.2,338.3 314.0,319.4 323.6,301.4 330.4,296.2 345.0,274.8 353.6,271.3 373.4,252.4 387.0,243.0 390.2,239.2" fill="none" stroke="#1a1a1a" stroke-width="3" stroke-linejoin="round" shape-rendering="crispEdges"/>
<polygon points="390.2,239.2 406.0,231.0 415.5,231.0 436.0,215.5 444.7,215.5 452.0,211.2 461.5,211.0 468.4,207.8 488.0,207.8 495.0,203.1 545.7,203.1 553.4,208.3 571.4,208.3 578.3,212.0 587.0,212.0 594.6,215.8 602.4,215.8 629.0,231.0 631.5,231.4 647.7,239.8 666.2,251.8 673.6,261.9 688.4,272.1 695.8,280.4 710.6,298.9 716.1,304.5 727.2,325.2 735.0,332.8 738.6,347.4 744.0,352.9 749.5,371.0 751.3,379.3 752.2,391.0 756.8,399.4 758.6,416.7 759.5,440.0 759.2,469.3 752.6,499.5 748.0,526.7 739.0,541.8 733.0,560.0 725.4,566.0 708.8,590.1 693.7,611.3 675.5,623.4 668.6,636.3 654.4,644.5 628.7,659.6 600.0,675.0 520.0,690.0 430.0,675.0 411.7,660.6 392.7,649.4 376.1,641.1 354.8,619.8 344.1,613.9 331.0,593.7 319.2,579.5 307.4,555.8 300.3,542.1 293.2,529.8 289.1,519.1 288.0,503.0 282.5,489.5 281.6,469.0 278.4,461.2 278.0,427.7 281.5,399.4 287.6,381.0 289.2,369.7 291.7,363.6 301.0,346.0 302.2,338.3 314.0,319.4 323.6,301.4 330.4,296.2 345.0,274.8 353.6,271.3 373.4,252.4 387.0,243.0 390.2,239.2" fill="none" stroke="#f0a030" stroke-width="1" stroke-linejoin="round" shape-rendering="crispEdges"/>
<polygon points="142.0,401.0 150.0,404.2 150.0,397.8" fill="#2a2a2a"/>
<polygon points="189.8,420.4 183.3,414.6 181.1,420.6" fill="#2a2a2a"/>
<polygon points="283.4,510.8 283.6,502.1 277.6,504.3" fill="#2a2a2a"/>
<polygon points="299.0,644.0 302.2,636.0 295.8,636.0" fill="#2a2a2a"/>
<polygon points="396.0,230.5 402.8,225.1 397.2,221.9" fill="#2a2a2a"/>
<polygon points="736.2,330.6 742.7,336.4 744.9,330.4" fill="#2a2a2a"/>
<polygon points="758.9,386.4 763.0,394.0 767.1,389.1" fill="#2a2a2a"/>
<polygon points="847.0,606.2 838.7,603.7 839.3,610.0" fill="#2a2a2a"/>
<rect x="387.0" y="236.0" width="6" height="6" fill="#ffff00" stroke="#000" stroke-width="1" shape-rendering="crispEdges"/>
<rect x="628.0" y="228.0" width="6" height="6" fill="#ffff00" stroke="#000" stroke-width="1" shape-rendering="crispEdges"/>
<rect x="724.0" y="322.0" width="6" height="6" fill="#ffff00" stroke="#000" stroke-width="1" shape-rendering="crispEdges"/>
<rect x="748.0" y="376.0" width="6" height="6" fill="#ffff00" stroke="#000" stroke-width="1" shape-rendering="crispEdges"/>
<rect x="665.6" y="633.0" width="6" height="6" fill="#ffff00" stroke="#000" stroke-width="1" shape-rendering="crispEdges"/>
<rect x="297.0" y="539.0" width="6" height="6" fill="#ffff00" stroke="#000" stroke-width="1" shape-rendering="crispEdges"/>
<rect x="286.0" y="516.0" width="6" height="6" fill="#ffff00" stroke="#000" stroke-width="1" shape-rendering="crispEdges"/>
<rect x="299.0" y="335.0" width="6" height="6" fill="#ffff00" stroke="#000" stroke-width="1" shape-rendering="crispEdges"/>
<rect x="109.0" y="393.0" width="4" height="4" fill="#ffff00" stroke="#000" stroke-width="1" shape-rendering="crispEdges"/>
<rect x="109" y="393" width="4" height="4" fill="#f0c040" stroke="#000" stroke-width="1"/>
<rect x="131.0" y="398.0" width="6" height="6" fill="#ffff00" stroke="#ff0000" stroke-width="1" shape-rendering="crispEdges"/>
<text x="0" y="0" transform="translate(241 399) rotate(-22.6)" font-family="Liberation Sans" font-size="11.3" fill="#3a3f4e">Серпуховское шоссе</text>
<text x="0" y="0" transform="translate(224 458) rotate(35)" font-family="Liberation Sans" font-size="11.3" fill="#3a3f4e">Серпуховское шоссе</text>
<circle cx="523.5" cy="442" r="5" fill="#dfefff" stroke="#5a88c8" stroke-width="1.2"/><circle cx="523.5" cy="442" r="2.5" fill="#3a78d8"/>
<g><rect x="952" y="286" width="15" height="2" fill="#8a8aff"/><path d="M953 289v2M956 288v2M959 288v2M962 288v2M965 288v2" stroke="#8a8aff"/><path d="M953 295l2-4h10l2 4v5h-14z" fill="#c8c8c8" stroke="#888" stroke-width=".8"/><rect x="955" y="292" width="10" height="3" fill="#d8f0ff"/><rect x="953" y="300" width="3" height="2" fill="#666"/></g>
<text x="962" y="306" font-family="Liberation Sans" font-size="9.6" fill="#000">Автомойка</text>
</svg><!-- RIGHT PANEL -->
<div class="a" style="left:1052px;top:171px;width:312px;height:505px;border:1px solid #8ea6c6;border-radius:2px;background:#d5e2f1"></div>
<svg class="a" style="left:1056px;top:174px" width="17" height="16" viewBox="0 0 17 16"><rect x="9" y="1" width="7" height="3.5" fill="#1aa0c8"/><rect x="10" y="6" width="6" height="3.5" fill="#1aa0c8"/><rect x="10" y="11.5" width="6" height="3.5" fill="#1aa0c8"/><circle cx="8" cy="5" r="3.5" fill="#f6d08a" stroke="#1a6a9a" stroke-width="1"/><path d="M6 8L1.5 13" stroke="#1aa0c8" stroke-width="2.5"/></svg>
<div class="t" style="left:1075px;top:176px;font-size:11.1px;color:#6578a6">Свойства объекта</div>
<svg class="a" style="left:1330px;top:178px" width="8" height="10" viewBox="0 0 8 10"><path d="M2 1h4v5h1.5v1H.5V6H2z" fill="#3c4a64"/><path d="M4 7v3" stroke="#3c4a64" stroke-width="1.2"/><rect x="3" y="2" width="1" height="4" fill="#d5e2f1"/></svg>
<svg class="a" style="left:1347px;top:179px" width="10" height="8" viewBox="0 0 10 8"><path d="M1 0.5l8 7M9 0.5l-8 7" stroke="#3c4a64" stroke-width="1.8"/></svg>
<!-- panel tabs -->
<div class="a" style="left:1199px;top:197px;width:113px;height:25px;border:1px solid #8fabd2;border-bottom:none;background:linear-gradient(#c6d7ee,#b6cbe6)"></div>
<div class="a" style="left:1058px;top:195px;width:142px;height:28px;border:1px solid #8fabd2;border-bottom:none;background:#fff"></div>
<div class="a" style="left:1055px;top:221px;width:303px;height:449px;border:1px solid #9fb8da;border-top:none;background:#fff"></div>
<div class="a" style="left:1056px;top:221px;width:3px;height:1px;background:#9fb8da"></div>
<div class="a" style="left:1312px;top:221px;width:46px;height:1px;background:#9fb8da"></div>
<svg class="a" style="left:1067px;top:201px" width="17" height="16" viewBox="0 0 17 16"><path d="M4.5 0v9M0 4.5h9M1.3 1.3l6.4 6.4M7.7 1.3L1.3 7.7" stroke="#f05010" stroke-width="1.1"/><rect x="3.5" y="5.5" width="10" height="10" rx="1.5" fill="#fff" stroke="#222" stroke-width="1.2"/><path d="M6 13l1-3 6-6 2 2-6 6z" fill="#f8d030" stroke="#444" stroke-width=".6"/><path d="M13 4l2 2 1-1-2-2z" fill="#c02010"/></svg>
<div class="t" style="left:1089px;top:204px;font-size:11.1px;color:#1c3570">Свойства объектов</div>
<svg class="a" style="left:1208px;top:201px" width="16" height="16" viewBox="0 0 16 16"><path d="M4 0v8M0 4h8M1 1l6 6M7 1L1 7" stroke="#f05010" stroke-width="1"/><rect x="6" y="2" width="9" height="11" fill="#fff6c0" stroke="#888" stroke-width=".8"/><rect x="6" y="2" width="9" height="2" fill="#a040c0"/><rect x="2.5" y="7.5" width="7" height="8" rx="1" fill="#fff6d0" stroke="#555" stroke-width=".8"/><path d="M4 10h4M4 12h4" stroke="#555" stroke-width=".8"/></svg>
<div class="t" style="left:1229px;top:205px;font-size:11.1px;color:#1c3570">Исходный код</div>
<svg class="a" style="left:1322px;top:199px" width="6" height="9"><path d="M5 0v9L0 4.5z" fill="#a8b8cc"/></svg>
<svg class="a" style="left:1348px;top:199px" width="6" height="9"><path d="M0 0v9l5-4.5z" fill="#4e5e80"/></svg>
<!-- toolbar -->
<div class="a" style="left:1056px;top:224px;width:23px;height:20px;border:1px solid #555;background:#e8e8e8"></div>
<svg class="a" style="left:1059px;top:226px" width="17" height="16" viewBox="0 0 17 16"><path d="M6 1h7l3 3v9H6z" fill="#d8e8fa" stroke="#7aa0d8" stroke-width=".8"/><path d="M1 6h5l1 1h6v8H1z" fill="#f8d888" stroke="#d8a040" stroke-width=".8"/><path d="M1 9h12v6H1z" fill="#fbe4a0" stroke="#d8a040" stroke-width=".8"/></svg>
<svg class="a" style="left:1082px;top:226px" width="16" height="16" viewBox="0 0 16 16"><path d="M2 15l8-8" stroke="#aaa" stroke-width="2.5"/><path d="M10 2l1 3 3-1-2 3 3 2-3 0-1 3-1-3-3 0 2-2z" fill="#aaa"/></svg>
<div class="a" style="left:1104px;top:227px;width:1px;height:16px;background:#888"></div>
<svg class="a" style="left:1116px;top:226px" width="10" height="16" viewBox="0 0 10 16"><path d="M3.5 1h3v9h3L5 15 .5 10h3z" fill="#5ab84a" stroke="#3a8a2a" stroke-width=".6"/></svg>
<div class="a" style="left:1135px;top:227px;width:1px;height:16px;background:#888"></div>
<div class="a" style="left:1141px;top:223px;width:158px;height:21px;border:1px solid #e3e9ef;background:#fff"></div>
<svg class="a" style="left:1143px;top:226px" width="16" height="14" viewBox="0 0 16 14"><path d="M1 6l2-5h3v12H1z" fill="#1a5a8a"/><path d="M15 6l-2-5h-3v12h5z" fill="#1a5a8a"/><rect x="6" y="4" width="4" height="3" fill="#1a5a8a"/><rect x="2" y="8" width="2.5" height="4" fill="#4aa0d8"/><rect x="11.5" y="8" width="2.5" height="4" fill="#4aa0d8"/></svg>
<div class="t" style="left:1161px;top:226px;font-size:11.1px;color:#3c4a66">Поиск типа по описанию</div>
<div class="a" style="left:1301px;top:225px;width:1px;height:18px;background:#666"></div>
<svg class="a" style="left:1305px;top:226px" width="22" height="16" viewBox="0 0 22 16"><path d="M1 1h1.5M1.5 1v3M1 6h2v2H1v2h2M1 12h2v1.5H1.5v1.5H3" fill="none" stroke="#444" stroke-width=".7"/><rect x="5" y="1.5" width="8" height="3" fill="#8f8fd8" stroke="#6a6ab8" stroke-width=".6"/><rect x="5" y="6.5" width="8" height="3" fill="#8f8fd8" stroke="#6a6ab8" stroke-width=".6"/><rect x="5" y="11.5" width="8" height="3" fill="#8f8fd8" stroke="#6a6ab8" stroke-width=".6"/><path d="M14 6h6l-3 3z" fill="#111"/></svg>
<!-- grid -->
<div class="a" style="left:1058px;top:245px;width:292px;height:139px;border:1px solid #a7bcd9"></div>
<div class="a" style="left:1059px;top:247px;width:290px;height:136px;border:2px solid #5b5f66;background:#fff"></div>
<div class="a" style="left:1061px;top:249px;width:271px;height:23px;background:linear-gradient(#fff,#f4f5f7);border-bottom:1px solid #d8dde4"></div>
<div class="a" style="left:1153px;top:251px;width:1px;height:114px;background:#ececec"></div>
<div class="a" style="left:1247px;top:251px;width:1px;height:114px;background:#ececec"></div>
<div class="t" style="left:1065px;top:254px;font-size:11.1px;color:#1a1a2a">Код</div>
<div class="t" style="left:1159px;top:254px;font-size:11.1px;color:#1a1a2a">Категория</div>
<div class="t" style="left:1253px;top:254px;font-size:11.1px;color:#1a1a2a">Описание</div>
<div class="a" style="left:1061px;top:289px;width:271px;height:1px;background:#ececec"></div>
<div class="a" style="left:1061px;top:306px;width:271px;height:1px;background:#ececec"></div>
<div class="a" style="left:1061px;top:323px;width:271px;height:1px;background:#ececec"></div>
<div class="a" style="left:1061px;top:357px;width:271px;height:1px;background:#ececec"></div>
<div class="a" style="left:1061px;top:341px;width:271px;height:16px;border:1px solid #86a8d8;background:linear-gradient(#dfeafa,#b8d0f0 50%,#a6c4ec)"></div>
<div class="a" style="left:1064px;top:273px;width:15px;height:15px;background:#cd853f"></div>
<div class="a" style="left:1064px;top:290px;width:15px;height:15px;background:#add8e6"></div>
<div class="a" style="left:1064px;top:307px;width:15px;height:15px;background:#ff69b4"></div>
<div class="a" style="left:1064px;top:324px;width:15px;height:15px;background:#2f2f2f"></div>
<div class="a" style="left:1064px;top:342px;width:15px;height:14px;background:#3cb371"></div>
<div class="t" style="left:1081px;top:275px;font-size:11.1px;color:#111">0x006C</div>
<div class="t" style="left:1081px;top:292px;font-size:11.1px;color:#111">0x006D</div>
<div class="t" style="left:1081px;top:309px;font-size:11.1px;color:#111">0x006E</div>
<div class="t" style="left:1081px;top:326px;font-size:11.1px;color:#111">0x006F</div>
<div class="t" style="left:1081px;top:343px;font-size:11.1px;color:#111">0x0098</div>
<div class="t" style="left:1159px;top:275px;font-size:11.1px;color:#111">Строения</div>
<div class="t" style="left:1159px;top:292px;font-size:11.1px;color:#111">Строения</div>
<div class="t" style="left:1159px;top:309px;font-size:11.1px;color:#111">Строения</div>
<div class="t" style="left:1159px;top:326px;font-size:11.1px;color:#111">Строения</div>
<div class="t" style="left:1159px;top:343px;font-size:11.1px;color:#111">Иск.сооруж.</div>
<div class="t" style="left:1253px;top:275px;font-size:11.1px;color:#111">Жилое здание</div>
<div class="t" style="left:1253px;top:292px;font-size:11.1px;color:#111;width:78px;overflow:hidden">Администрати..</div>
<div class="t" style="left:1253px;top:309px;font-size:11.1px;color:#111;width:78px;overflow:hidden">Общественно..</div>
<div class="t" style="left:1253px;top:326px;font-size:11.1px;color:#111;width:78px;overflow:hidden">Промышленно..</div>
<div class="t" style="left:1253px;top:343px;font-size:11.1px;color:#111">Газон</div>
<!-- grid v-scroll -->
<div class="a" style="left:1332px;top:249px;width:17px;height:116px;background:linear-gradient(90deg,#e6e6e6,#f2f2f2)"></div>
<svg class="a" style="left:1336px;top:256px" width="9" height="5"><path d="M0 5h9L4.5 0z" fill="#333"/></svg>
<div class="a" style="left:1333px;top:332px;width:15px;height:15px;border:1px solid #9a9a9a;background:linear-gradient(90deg,#f4f4f4,#e0e0e0)"></div>
<svg class="a" style="left:1336px;top:355px" width="9" height="5"><path d="M0 0h9L4.5 5z" fill="#333"/></svg>
<!-- grid h-scroll -->
<div class="a" style="left:1061px;top:365px;width:288px;height:16px;background:linear-gradient(#e6e6e6,#f2f2f2)"></div>
<svg class="a" style="left:1066px;top:369px" width="5" height="9"><path d="M5 0v9L0 4.5z" fill="#333"/></svg>
<div class="a" style="left:1078px;top:366px;width:223px;height:15px;border:1px solid #9a9a9a;border-radius:2px;background:linear-gradient(#f6f6f6,#e2e2e2)"></div>
<svg class="a" style="left:1321px;top:369px" width="5" height="9"><path d="M0 0v9l5-4.5z" fill="#333"/></svg>
<div class="a" style="left:1332px;top:365px;width:17px;height:16px;background:#f0f0f0"></div>
<!-- splitter -->
<div class="a" style="left:1059px;top:383px;width:290px;height:9px;background:linear-gradient(#d6d6d6,#c8c8c8)"></div>
<div class="a" style="left:1147px;top:384px;width:114px;height:7px;background:#e8eef5"></div>
<svg class="a" style="left:1147px;top:384px" width="114" height="7"><path d="M3 6l3-4 3 4zM105 6l3-4 3 4z" fill="#3a88d8"/><path d="M13 4.5H101" stroke="#3a88d8" stroke-dasharray="1 3" stroke-width="1"/></svg>
<!-- PROPERTY GRID -->
<div class="a" style="left:1058px;top:391px;width:292px;height:246px;border:1px solid #9fb8da;border-top:none;background:#d1deef"></div>
<div class="a" style="left:1059px;top:392px;width:20px;height:19px;background:#e6eef9"></div>
<div class="a" style="left:1079px;top:392px;width:117px;height:19px;background:#fff;border-top:1px solid #c4d6f0;border-right:1px solid #c4d6f0"></div>
<div class="a" style="left:1196px;top:392px;width:135px;height:19px;background:#d1deef;border-top:1px solid #c4d6f0"></div>
<svg class="a" style="left:1099px;top:394px" width="16" height="14" viewBox="0 0 16 14"><path d="M1 2h6l1 1 1-1h6v10H9l-1 1-1-1H1z" fill="#1a5a9a"/><path d="M2.5 3h4.5v8H2.5zM9 3h4.5v8H9z" fill="#f4f4f4"/><path d="M3.5 5h3M3.5 7h3M3.5 9h3M9.5 5h3M9.5 7h3M9.5 9h3" stroke="#999" stroke-width=".6"/></svg>
<div class="t" style="left:1117px;top:395px;width:78px;overflow:hidden;font-size:11.1px;color:#1a2a44">Наименование</div>
<div class="a" style="left:1059px;top:411px;width:20px;height:19px;background:#e6eef9"></div>
<div class="a" style="left:1079px;top:411px;width:117px;height:19px;background:#fff;border-top:1px solid #c4d6f0;border-right:1px solid #c4d6f0"></div>
<div class="a" style="left:1196px;top:411px;width:135px;height:19px;background:#d1deef;border-top:1px solid #c4d6f0"></div>
<svg class="a" style="left:1099px;top:413px" width="16" height="14" viewBox="0 0 16 14"><path d="M1 2h6l1 1 1-1h6v10H9l-1 1-1-1H1z" fill="#1a5a9a"/><path d="M2.5 3h4.5v8H2.5zM9 3h4.5v8H9z" fill="#f4f4f4"/><path d="M3.5 5h3M3.5 7h3M3.5 9h3M9.5 5h3M9.5 7h3M9.5 9h3" stroke="#999" stroke-width=".6"/></svg>
<div class="t" style="left:1117px;top:414px;width:78px;overflow:hidden;font-size:11.1px;color:#1a2a44">Наименование:</div>
<div class="a" style="left:1059px;top:430px;width:20px;height:19px;background:#e6eef9"></div>
<div class="a" style="left:1079px;top:430px;width:117px;height:19px;background:#fff;border-top:1px solid #c4d6f0;border-right:1px solid #c4d6f0"></div>
<div class="a" style="left:1196px;top:430px;width:135px;height:19px;background:#d1deef;border-top:1px solid #c4d6f0"></div>
<svg class="a" style="left:1099px;top:432px" width="16" height="14" viewBox="0 0 16 14"><path d="M1 2h6l1 1 1-1h6v10H9l-1 1-1-1H1z" fill="#1a5a9a"/><path d="M2.5 3h4.5v8H2.5zM9 3h4.5v8H9z" fill="#f4f4f4"/><path d="M3.5 5h3M3.5 7h3M3.5 9h3M9.5 5h3M9.5 7h3M9.5 9h3" stroke="#999" stroke-width=".6"/></svg>
<div class="t" style="left:1117px;top:433px;width:78px;overflow:hidden;font-size:11.1px;color:#1a2a44">Наименование2</div>
<div class="a" style="left:1059px;top:449px;width:20px;height:19px;background:#e6eef9"></div>
<div class="a" style="left:1079px;top:449px;width:117px;height:19px;background:#fff;border-top:1px solid #c4d6f0;border-right:1px solid #c4d6f0"></div>
<div class="a" style="left:1196px;top:449px;width:135px;height:19px;background:#d1deef;border-top:1px solid #c4d6f0"></div>
<svg class="a" style="left:1099px;top:451px" width="16" height="15" viewBox="0 0 16 15"><path d="M1.5 1.5h7v5h-5l-2 2z" fill="#fff" stroke="#8ab0d8" stroke-width=".9"/><path d="M5.5 5.5h9v5h-6l-3 3v-3z" fill="#e8f2fc" stroke="#6a98c8" stroke-width=".9"/></svg>
<div class="t" style="left:1117px;top:452px;width:78px;overflow:hidden;font-size:11.1px;color:#1a2a44">Комментарий</div>
<div class="t" style="left:1199px;top:452px;font-size:11.1px;color:#1a2a44">23.05.2013 21:17:34</div>
<div class="a" style="left:1059px;top:468px;width:20px;height:19px;background:#e6eef9"></div>
<div class="a" style="left:1079px;top:468px;width:117px;height:19px;background:#fff;border-top:1px solid #c4d6f0;border-right:1px solid #c4d6f0"></div>
<div class="a" style="left:1196px;top:468px;width:135px;height:19px;background:#d1deef;border-top:1px solid #c4d6f0"></div>
<svg class="a" style="left:1099px;top:470px" width="16" height="15" viewBox="0 0 16 15"><path d="M1.5 8.5h6v4h-4l-2 2z" fill="#e8f2fc" stroke="#6a98c8" stroke-width=".9"/><path d="M4 11l1.5-3.5L13 0l2 2-7.5 7.5z" fill="#f8c030" stroke="#a06010" stroke-width=".7"/></svg>
<div class="t" style="left:1117px;top:471px;width:78px;overflow:hidden;font-size:11.1px;color:#1a2a44">Описание</div>
<div class="a" style="left:1059px;top:487px;width:272px;height:19px;background:#e6edf7;border-bottom:1px solid #d0dced"></div>
<svg class="a" style="left:1066px;top:494px" width="8" height="6"><path d="M1 1l3 3 3-3" fill="none" stroke="#3a4a6a" stroke-width="1.6"/></svg>
<div class="t" style="left:1099px;top:490px;font-size:11.7px;font-weight:bold;color:#1e2e50">Элементы уровни детализации</div>
<div class="a" style="left:1059px;top:506px;width:20px;height:19px;background:#e6eef9"></div>
<div class="a" style="left:1079px;top:506px;width:117px;height:19px;background:#fff;border-top:1px solid #c4d6f0;border-right:1px solid #c4d6f0"></div>
<div class="a" style="left:1196px;top:506px;width:135px;height:19px;background:#d1deef;border-top:1px solid #c4d6f0"></div>
<svg class="a" style="left:1099px;top:508px" width="16" height="15" viewBox="0 0 16 15"><path d="M1 5l7-3.5L15 5v6l-7 3.5L1 11z" fill="#e4e4e4" stroke="#a0a0a0" stroke-width=".8"/><path d="M1 5l7 3.5L15 5M8 8.5v6" fill="none" stroke="#b0b0b0" stroke-width=".8"/><ellipse cx="6" cy="4" rx="2" ry="1" fill="#fafafa" stroke="#aaa" stroke-width=".6"/><ellipse cx="10.5" cy="4" rx="2" ry="1" fill="#fafafa" stroke="#aaa" stroke-width=".6"/></svg>
<div class="t" style="left:1117px;top:509px;width:78px;overflow:hidden;font-size:11.1px;color:#1a2a44">Элементов</div>
<div class="t" style="left:1199px;top:509px;font-size:11.1px;color:#1a2a44">1</div>
<div class="a" style="left:1059px;top:525px;width:20px;height:19px;background:#e6eef9"></div>
<div class="a" style="left:1079px;top:525px;width:117px;height:19px;background:#fff;border-top:1px solid #c4d6f0;border-right:1px solid #c4d6f0"></div>
<div class="a" style="left:1196px;top:525px;width:135px;height:19px;background:#d1deef;border-top:1px solid #c4d6f0"></div>
<svg class="a" style="left:1099px;top:527px" width="15" height="15" viewBox="0 0 15 15"><rect x="3" y="3" width="9" height="9" fill="#6a98d8"/><g fill="#fff" stroke="#111" stroke-width=".8"><rect x="1" y="1" width="2.5" height="2.5"/><rect x="11.5" y="1" width="2.5" height="2.5"/><rect x="1" y="11.5" width="2.5" height="2.5"/><rect x="11.5" y="11.5" width="2.5" height="2.5"/><rect x="6.2" y="1" width="2.5" height="2.5"/><rect x="6.2" y="11.5" width="2.5" height="2.5"/></g></svg>
<div class="t" style="left:1117px;top:528px;width:78px;overflow:hidden;font-size:11.1px;color:#1a2a44">На уровень</div>
<div class="t" style="left:1199px;top:528px;font-size:11.1px;color:#1a2a44">0</div>
<div class="a" style="left:1059px;top:544px;width:20px;height:19px;background:#e6eef9"></div>
<div class="a" style="left:1079px;top:544px;width:117px;height:19px;background:#fff;border-top:1px solid #c4d6f0;border-right:1px solid #c4d6f0"></div>
<div class="a" style="left:1196px;top:544px;width:135px;height:19px;background:#d1deef;border-top:1px solid #c4d6f0"></div>
<svg class="a" style="left:1099px;top:546px" width="15" height="15" viewBox="0 0 15 15"><rect x="3" y="3" width="9" height="9" fill="#6a98d8"/><g fill="#fff" stroke="#111" stroke-width=".8"><rect x="1" y="1" width="2.5" height="2.5"/><rect x="11.5" y="1" width="2.5" height="2.5"/><rect x="1" y="11.5" width="2.5" height="2.5"/><rect x="11.5" y="11.5" width="2.5" height="2.5"/><rect x="6.2" y="1" width="2.5" height="2.5"/><rect x="6.2" y="11.5" width="2.5" height="2.5"/></g></svg>
<div class="t" style="left:1117px;top:547px;width:78px;overflow:hidden;font-size:11.1px;color:#1a2a44">До уровня</div>
<div class="t" style="left:1199px;top:547px;font-size:11.1px;color:#1a2a44">0</div>
<div class="a" style="left:1059px;top:563px;width:272px;height:19px;background:#e6edf7;border-bottom:1px solid #d0dced"></div>
<svg class="a" style="left:1066px;top:570px" width="8" height="6"><path d="M1 1l3 3 3-3" fill="none" stroke="#3a4a6a" stroke-width="1.6"/></svg>
<div class="t" style="left:1099px;top:566px;font-size:11.7px;font-weight:bold;color:#1e2e50">Адресная и контактная информация</div>
<div class="a" style="left:1059px;top:582px;width:20px;height:19px;background:#e6eef9"></div>
<div class="a" style="left:1079px;top:582px;width:117px;height:19px;background:#fff;border-top:1px solid #c4d6f0;border-right:1px solid #c4d6f0"></div>
<div class="a" style="left:1196px;top:582px;width:135px;height:19px;background:#d1deef;border-top:1px solid #c4d6f0"></div>
<svg class="a" style="left:1099px;top:584px" width="16" height="14" viewBox="0 0 16 14"><path d="M1 7l2-6h3v12H1z" fill="#1a5a8a"/><path d="M15 7l-2-6h-3v12h5z" fill="#1a5a8a"/><rect x="6" y="4" width="4" height="3" fill="#1a5a8a"/><rect x="2" y="8" width="2.5" height="4" fill="#4aa0d8"/><rect x="11.5" y="8" width="2.5" height="4" fill="#4aa0d8"/></svg>
<div class="t" style="left:1117px;top:585px;width:78px;overflow:hidden;font-size:11.1px;color:#1a2a44">Индексировать</div>
<div class="a" style="left:1257px;top:587px;width:13px;height:13px;border:1px solid #a8b8cc;background:linear-gradient(#f4f6f8,#dde4ec)"></div>
<svg class="a" style="left:1259px;top:589px" width="9" height="9"><path d="M1 4.5l2.5 3L8 1" fill="none" stroke="#3a5a8a" stroke-width="1.6"/></svg>
<div class="a" style="left:1059px;top:601px;width:20px;height:19px;background:#e6eef9"></div>
<div class="a" style="left:1079px;top:601px;width:117px;height:19px;background:#fff;border-top:1px solid #c4d6f0;border-right:1px solid #c4d6f0"></div>
<div class="a" style="left:1196px;top:601px;width:135px;height:19px;background:#d1deef;border-top:1px solid #c4d6f0"></div>
<svg class="a" style="left:1099px;top:603px" width="16" height="16" viewBox="0 0 16 16"><circle cx="8" cy="8" r="7.5" fill="#58a840"/><circle cx="8" cy="8" r="5.8" fill="#4a90d8"/><path d="M4 5c2-1 3 1 4 2s-1 3 0 4-2 1-3-1-2-3-1-5zM9 3c2 0 4 2 3 4s-2 0-2-1-2-2-1-3z" fill="#78c060"/></svg>
<div class="t" style="left:1117px;top:604px;width:78px;overflow:hidden;font-size:11.1px;color:#1a2a44">Страна</div>
<div class="a" style="left:1059px;top:620px;width:20px;height:16px;background:#e6eef9"></div>
<div class="a" style="left:1079px;top:620px;width:117px;height:16px;background:#fff;border-top:1px solid #c4d6f0;border-right:1px solid #c4d6f0"></div>
<div class="a" style="left:1196px;top:620px;width:135px;height:16px;background:#d1deef;border-top:1px solid #c4d6f0"></div>
<svg class="a" style="left:1099px;top:622px" width="16" height="16" viewBox="0 0 16 16"><circle cx="8" cy="8" r="7.5" fill="#58a840"/><circle cx="8" cy="8" r="5.8" fill="#4a90d8"/><path d="M4 5c2-1 3 1 4 2s-1 3 0 4-2 1-3-1-2-3-1-5zM9 3c2 0 4 2 3 4s-2 0-2-1-2-2-1-3z" fill="#78c060"/></svg>
<div class="t" style="left:1117px;top:623px;width:78px;overflow:hidden;font-size:11.1px;color:#1a2a44">Область (район)</div>
<div class="a" style="left:1331px;top:392px;width:18px;height:244px;background:#dfe8f4;border-left:1px solid #c8d6ea"></div>
<svg class="a" style="left:1336px;top:399px" width="9" height="5"><path d="M0 5h9L4.5 0z" fill="#4a5a78"/></svg>
<div class="a" style="left:1333px;top:432px;width:14px;height:93px;border:1px solid #a9bdd8;border-radius:3px;background:linear-gradient(90deg,#e8eff8,#d8e3f2)"></div>
<svg class="a" style="left:1336px;top:475px" width="8" height="6"><path d="M0 .5h8M0 2.5h8M0 4.5h8" stroke="#8a9ab0" stroke-width=".8"/></svg>
<svg class="a" style="left:1336px;top:625px" width="9" height="5"><path d="M0 0h9L4.5 5z" fill="#4a5a78"/></svg>
<div class="a" style="left:1058px;top:636px;width:292px;height:1px;background:#9fb8da"></div>
<div class="a" style="left:1056px;top:652px;width:49px;height:17px;background:#ccd9ea"></div>
<svg class="a" style="left:1064px;top:656px" width="5" height="9"><path d="M5 0v9L0 4.5z" fill="#a8b8cc"/></svg>
<svg class="a" style="left:1089px;top:656px" width="5" height="9"><path d="M0 0v9l5-4.5z" fill="#3c4a64"/></svg>
<div class="a" style="left:1240px;top:638px;width:108px;height:28px;background:linear-gradient(#bccde6,#b4c7e2)"></div>
<div class="a" style="left:1105px;top:637px;width:136px;height:32px;border:1px solid #9fb8da;border-top:none;background:#fff"></div>
<svg class="a" style="left:1113px;top:644px" width="17" height="16" viewBox="0 0 17 16"><rect x="9" y="1" width="7" height="3.5" fill="#1aa0c8"/><rect x="10" y="6" width="6" height="3.5" fill="#1aa0c8"/><rect x="10" y="11.5" width="6" height="3.5" fill="#1aa0c8"/><circle cx="8" cy="5" r="3.5" fill="#f6d08a" stroke="#1a6a9a" stroke-width="1"/><path d="M6 8L1.5 13" stroke="#1aa0c8" stroke-width="2.5"/></svg>
<div class="t" style="left:1136px;top:646px;font-size:11.1px;color:#1c3570">Свойства объекта</div>
<svg class="a" style="left:1249px;top:644px" width="15" height="16" viewBox="0 0 15 16"><path d="M1.5 1v15" stroke="#c89020" stroke-width="1.6"/><path d="M2 1.5l12 5-12 5z" fill="#98d020" stroke="#5a9010" stroke-width=".7"/></svg>
<div class="t" style="left:1270px;top:646px;width:78px;overflow:hidden;font-size:11.1px;color:#1c3570">Точки трека и маршруты</div><!-- MAP SCROLLBARS -->
<div class="a" style="left:28px;top:661px;width:1005px;height:1px;background:#a0a0a0"></div>
<div class="a" style="left:1032px;top:188px;width:1px;height:474px;background:#a0a0a0"></div>
<div class="a" style="left:1033px;top:188px;width:17px;height:474px;background:linear-gradient(90deg,#dcdcdc,#ececec 60%,#e4e4e4)"></div>
<svg class="a" style="left:1037px;top:196px" width="9" height="5"><path d="M0 5h9L4.5 0z" fill="#222"/></svg>
<div class="a" style="left:1034px;top:302px;width:15px;height:17px;border:1px solid #9c9c9c;border-radius:1px;background:linear-gradient(90deg,#f6f6f6,#e6e6e6)"></div>
<svg class="a" style="left:1037px;top:651px" width="9" height="5"><path d="M0 0h9L4.5 5z" fill="#222"/></svg>
<div class="a" style="left:28px;top:662px;width:1022px;height:17px;background:linear-gradient(#dcdcdc,#ececec 60%,#e4e4e4)"></div>
<svg class="a" style="left:34px;top:666px" width="5" height="9"><path d="M5 0v9L0 4.5z" fill="#222"/></svg>
<div class="a" style="left:500px;top:663px;width:16px;height:15px;border:1px solid #9c9c9c;border-radius:1px;background:linear-gradient(#f6f6f6,#e6e6e6)"></div>
<svg class="a" style="left:1039px;top:666px" width="5" height="9"><path d="M0 0v9l5-4.5z" fill="#222"/></svg>
<!-- STATUS BAR -->
<div id="status" class="a"></div>
<div class="a" style="left:4px;top:708px;width:177px;height:16px;border:1px solid #8a9aae;border-radius:2px;background:linear-gradient(#f0f0f0,#fafafa 40%,#e8e8e8)"></div>
<div class="t" style="left:81px;top:710px;font-size:11px;color:#3a7ee8">0%</div>
<div class="t" style="left:190px;top:710px;font-size:11.3px;color:#1e2e50">Готов</div>
<div class="a" style="left:362px;top:706px;width:2px;height:21px;border-left:1px solid #b8c8dc;border-right:1px solid #f4f8fc"></div>
<div class="a" style="left:415px;top:706px;width:2px;height:21px;border-left:1px solid #b8c8dc;border-right:1px solid #f4f8fc"></div>
<div class="t" style="left:425px;top:710px;font-size:11.3px;color:#1e2e50">N54°52.818' E37°14.246'</div>
<div class="a" style="left:568px;top:706px;width:2px;height:21px;border-left:1px solid #b8c8dc;border-right:1px solid #f4f8fc"></div>
<div class="t" style="left:579px;top:710px;font-size:11.3px;color:#1e2e50">1 : 530</div>
<div class="a" style="left:671px;top:706px;width:2px;height:21px;border-left:1px solid #b8c8dc;border-right:1px solid #f4f8fc"></div>
<div class="t" style="left:684px;top:710px;font-size:11.3px;color:#1e2e50">*Level0</div>
<div class="a" style="left:746px;top:706px;width:2px;height:21px;border-left:1px solid #b8c8dc;border-right:1px solid #f4f8fc"></div>
<div class="a" style="left:1068px;top:706px;width:2px;height:21px;border-left:1px solid #b8c8dc;border-right:1px solid #f4f8fc"></div>
<div class="t" style="left:1078px;top:710px;font-size:11px;color:#a2aebe">CAPS</div>
<div class="a" style="left:1110px;top:706px;width:2px;height:21px;border-left:1px solid #b8c8dc;border-right:1px solid #f4f8fc"></div>
<div class="t" style="left:1120px;top:710px;font-size:11px;color:#1e2e50">NUM</div>
<div class="a" style="left:1150px;top:706px;width:2px;height:21px;border-left:1px solid #b8c8dc;border-right:1px solid #f4f8fc"></div>
<div class="t" style="left:1159px;top:710px;font-size:11px;color:#a2aebe">SCRL</div>
<div class="a" style="left:1192px;top:706px;width:2px;height:21px;border-left:1px solid #b8c8dc;border-right:1px solid #f4f8fc"></div>
<div class="t" style="left:1203px;top:710px;font-size:11px;color:#a2aebe">INS</div>
<div class="a" style="left:1229px;top:706px;width:2px;height:21px;border-left:1px solid #b8c8dc;border-right:1px solid #f4f8fc"></div>
<!-- TASKBAR -->
<div id="taskbar" class="a"></div>
<div class="a" style="left:0;top:728px;width:1366px;height:1px;background:#0e1e30"></div>
<div class="a" style="left:0;top:729px;width:1366px;height:1px;background:rgba(255,255,255,.25)"></div>
<svg class="a" style="left:8px;top:730px" width="37" height="36" viewBox="0 0 37 36"><defs><linearGradient id="orb" x1="0" y1="0" x2="0" y2="1"><stop offset="0" stop-color="#c8dcec"/><stop offset=".45" stop-color="#4a7aa8"/><stop offset=".55" stop-color="#1a4a80"/><stop offset="1" stop-color="#0a3a70"/></linearGradient><radialGradient id="orbg" cx="50%" cy="100%" r="55%"><stop offset="0" stop-color="#40f0ff"/><stop offset="1" stop-color="#30c0ff" stop-opacity="0"/></radialGradient></defs><circle cx="18.5" cy="18" r="17.5" fill="url(#orb)" stroke="#0a2a50" stroke-width=".8"/><ellipse cx="18.5" cy="30" rx="13" ry="7" fill="url(#orbg)"/><path d="M8 11c3-1.5 5-1 7.5.3v6.2H8z" fill="#f06a20"/><path d="M18.5 10.5c3 1.3 5.5 1.5 8.5 0v7H18.5z" fill="#80c040"/><path d="M8 19.5h7.5v6.5c-2.5-1.3-4.5-1.8-7.5-.3z" fill="#40a8f0"/><path d="M18.5 19.5H27v7c-3 1.5-5.5 1.3-8.5 0z" fill="#ffc030"/></svg>
<svg class="a" style="left:75px;top:734px" width="29" height="29" viewBox="0 0 29 29"><circle cx="14.5" cy="14.5" r="14" fill="#db4437"/><path d="M14.5 14.5L2.4 7.5A14 14 0 0 0 14.5 28.5z" fill="#0f9d58"/><path d="M14.5 14.5V28.5A14 14 0 0 0 26.6 7.5z" fill="#f4c20d"/><path d="M2.4 7.5A14 14 0 0 1 26.6 7.5H14.5z" fill="#db4437"/><circle cx="14.5" cy="14.5" r="6.3" fill="#fff"/><circle cx="14.5" cy="14.5" r="5" fill="#4285f4"/></svg>
<svg class="a" style="left:135px;top:734px" width="33" height="30" viewBox="0 0 33 30"><path d="M1 3h10l2 2h18v24H1z" fill="#e8c870" stroke="#b89a40" stroke-width=".8"/><rect x="4" y="5" width="24" height="8" fill="#fff"/><rect x="5" y="6" width="4" height="2" fill="#30b030"/><rect x="12" y="7" width="4" height="2" fill="#e03030"/><rect x="20" y="8" width="4" height="2" fill="#30a0e0"/><path d="M1 11h31l-1 18H1z" fill="#f6e0a0" stroke="#c8a850" stroke-width=".8"/><path d="M8 28v-7h16v7h-4v-4h-8v4z" fill="#60b8e8" stroke="#3a88c8" stroke-width=".8"/></svg>
<svg class="a" style="left:197px;top:732px" width="31" height="32" viewBox="0 0 31 32"><path d="M1 1h26l3 3v27H1z" fill="#2a50d0" stroke="#1a2a8a"/><rect x="8" y="1" width="14" height="10" fill="#e8e8e8"/><rect x="16" y="3" width="3" height="7" fill="#2a50d0"/><rect x="4" y="14" width="23" height="17" fill="#fff"/><path d="M6 18h19M6 22h19M6 26h11" stroke="#d02020" stroke-width="1.2"/><text x="17" y="30" font-size="6" font-family="Liberation Mono" fill="#333">64</text></svg>
<svg class="a" style="left:259px;top:734px" width="32" height="28" viewBox="0 0 32 28"><path d="M1 1L22 14 1 27z" fill="#7a3ac8"/><path d="M1 1L13 14 1 27z" fill="#9a60e0"/><path d="M31 1L14 14 31 27z" fill="#d8c8f0" stroke="#a080d0" stroke-width=".6"/></svg>
<!-- taskbar buttons -->
<div class="a" style="left:308px;top:729px;width:59px;height:39px;border:1px solid #6ae06a;border-radius:2px;background:linear-gradient(90deg,#3c8a4a,#5ad05a 55%,#2f6ea8 55%,#3a80b8)"></div>
<svg class="a" style="left:322px;top:733px" width="31" height="30" viewBox="0 0 31 30"><circle cx="15" cy="15" r="14" fill="#111"/><circle cx="15" cy="15" r="11" fill="#f8a020"/><path d="M15 7l7 12H8z" fill="#111"/><path d="M15 11l3.5 6h-7z" fill="#f8a020"/><path d="M21 17v11l8-5.5z" fill="#fff" stroke="#ccc" stroke-width=".6"/></svg>
<div class="a" style="left:369px;top:729px;width:60px;height:39px;border:1px solid #7aaee0;border-radius:2px;background:linear-gradient(#4a88c0,#2f6ea8)"></div>
<svg class="a" style="left:385px;top:734px" width="29" height="28" viewBox="0 0 29 28"><rect x="1" y="1" width="4" height="26" fill="#f09010" stroke="#a06010" stroke-width=".5"/><rect x="7" y="18" width="4" height="9" fill="#70d020"/><rect x="13" y="6" width="4.5" height="21" fill="#e01010"/><rect x="19" y="11" width="4" height="16" fill="#f0d020"/><rect x="24.5" y="3" width="4" height="24" fill="#e01010"/></svg>
<div class="a" style="left:431px;top:729px;width:60px;height:39px;border:1px solid #7aaee0;border-radius:2px;background:linear-gradient(#4a88c0,#2f6ea8)"></div>
<svg class="a" style="left:446px;top:732px" width="30" height="31" viewBox="0 0 30 31"><circle cx="15" cy="14.5" r="13.5" fill="#30b030"/><path d="M5 24l-2 6 8-3z" fill="#30b030"/><circle cx="15" cy="14.5" r="8" fill="none" stroke="#fff" stroke-width="3"/><circle cx="15" cy="14.5" r="3.2" fill="none" stroke="#fff" stroke-width="2.5"/><path d="M18.2 12v5c0 2 3 2 4 0" fill="none" stroke="#fff" stroke-width="2.5"/></svg>
<div class="a" style="left:493px;top:729px;width:60px;height:39px;border:1px solid #b8d8f0;border-radius:2px;background:linear-gradient(#9ac4e4,#6aa0cc)"></div>
<svg class="a" style="left:508px;top:733px" width="30" height="30" viewBox="0 0 30 30"><rect x="2" y="4" width="25" height="24" fill="#2a5a86" stroke="#aaa" stroke-width="1.2"/><rect x="4" y="6" width="21" height="20" fill="#4a88b8"/><ellipse cx="15" cy="12" rx="5" ry="4" fill="#e0f0fa"/><path d="M4 26l7-8 6 4 8-6v10z" fill="#1d4466"/><path d="M21 4l7-3" stroke="#ccc" stroke-width="1.5"/></svg>
<div class="t" style="left:1136px;top:741px;font-size:11px;color:#fff">RU</div>
<svg class="a" style="left:1168px;top:744px" width="9" height="6"><path d="M0 5.5h9L4.5 0z" fill="#fff"/></svg>
<svg class="a" style="left:1187px;top:740px" width="17" height="17" viewBox="0 0 17 17"><path d="M2 1v15" stroke="#fff" stroke-width="1.8"/><path d="M3 2h6l1 1.5h6v6h-6l-1-1.5H3z" fill="#fff"/></svg>
<svg class="a" style="left:1211px;top:740px" width="16" height="17" viewBox="0 0 16 17"><rect x="2" y="3" width="11" height="10" rx="1" fill="none" stroke="#fff" stroke-width="1.5"/><path d="M5 0v4M10 0v4M7.5 13v4" stroke="#fff" stroke-width="1.6"/><rect x="4.5" y="5.5" width="6" height="5" fill="#fff"/></svg>
<svg class="a" style="left:1235px;top:741px" width="17" height="15" viewBox="0 0 17 15"><path d="M1.5 14v-2M4.5 14V9.5M7.5 14V7M10.5 14V4.5M13.5 14V2" stroke="#fff" stroke-width="1.8"/></svg>
<svg class="a" style="left:1260px;top:740px" width="17" height="17" viewBox="0 0 17 17"><path d="M1 6h3l4-4v13l-4-4H1z" fill="#fff"/><path d="M10.5 5.5c1.5 1.5 1.5 4.5 0 6M13 3.5c2.5 2.5 2.5 7.5 0 10" fill="none" stroke="#fff" stroke-width="1.3"/></svg>
<div class="t" style="left:1297px;top:740px;font-size:15.5px;line-height:17px;color:#fff">13:20</div>
<div class="a" style="left:1351px;top:729px;width:15px;height:39px;border-left:1px solid #1a3a5a;background:linear-gradient(90deg,rgba(255,255,255,.25),rgba(255,255,255,.12));box-shadow:inset 1px 0 0 rgba(255,255,255,.35)"></div>
</body></html>
